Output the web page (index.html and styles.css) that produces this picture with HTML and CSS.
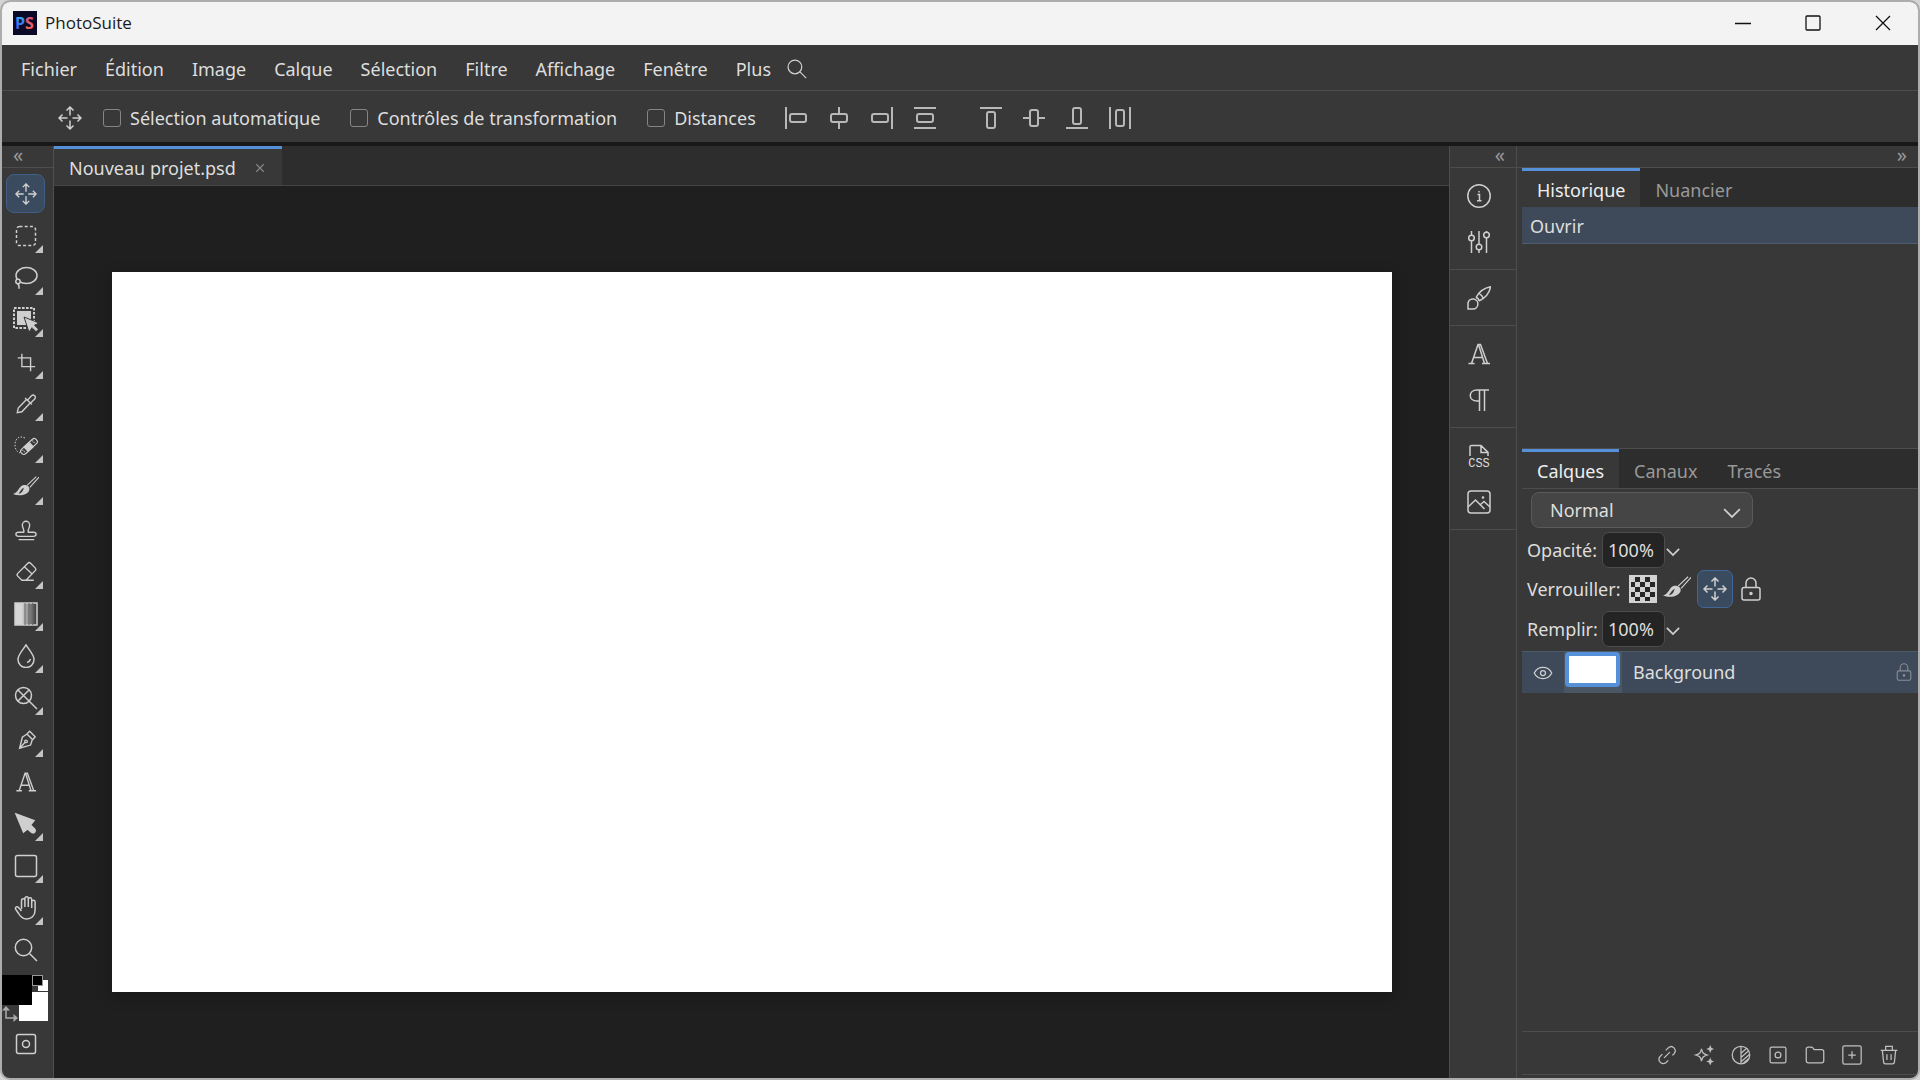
FILE: index.html
```html
<!DOCTYPE html>
<html lang="fr">
<head>
<meta charset="utf-8">
<meta name="viewport" content="width=device-width, initial-scale=1">
<title>PhotoSuite</title>
<link rel="stylesheet" href="styles.css">
</head>
<body>
<svg class="sprite" aria-hidden="true">
  <defs>
    <linearGradient id="logo-p" x1="0" y1="0" x2="0" y2="1"><stop offset="0" stop-color="#2fc6f5"/><stop offset="1" stop-color="#4a35e0"/></linearGradient>
    <linearGradient id="logo-s" x1="0" y1="0" x2="0" y2="1"><stop offset="0" stop-color="#c94fa8"/><stop offset="1" stop-color="#ff6a3c"/></linearGradient>
    <linearGradient id="ramp"><stop offset=".3" stop-color="#d6d6d6"/><stop offset="1" stop-color="#383838"/></linearGradient>
  </defs>
  <symbol id="move" viewBox="0 0 24 24"><path d="M12 9.500V1M8.500 4.500 12 1l3.500 3.500M12 14.500V23M8.500 19.500 12 23l3.500-3.500M9.500 12H1M4.500 8.500 1 12l3.500 3.500M14.500 12H23M19.500 8.500 23 12l-3.500 3.500"/></symbol>
  <symbol id="marquee" viewBox="0 0 24 24"><rect x="2.500" y="2.500" width="19" height="19" rx="3" stroke-dasharray="3 2.200"/></symbol>
  <symbol id="lasso" viewBox="0 0 24 24"><ellipse cx="12.500" cy="9.500" rx="10.500" ry="8"/><circle cx="4" cy="15.500" r="2.200" fill="#383838"/><path d="M3.500 17.700c2 .8 1.500 3 1.500 5"/></symbol>
  <symbol id="object" viewBox="0 0 26 26"><rect x="1" y="1" width="20" height="20" stroke-width="2" stroke-dasharray="2.600 1.400"/><path fill="currentColor" stroke="none" d="M4 4h14v14H4z"/><path fill="currentColor" stroke="#383838" stroke-width="1" d="m11 10 15 6-4.500 2.200 4 4-2.500 2.500-4-4-3 4.500z"/></symbol>
  <symbol id="crop" viewBox="0 0 24 24"><path d="M7.500 3v14H22M3 7.500h14V22"/></symbol>
  <symbol id="pipette" viewBox="0 0 24 24"><path d="m12.500 7-9 9.500-1 5 5-1 9-9.500M11 5.500l7.500 7M14 7.500l4-4.500c2.500-2 5.500 1 3.500 3.500l-4.500 4.500"/></symbol>
  <symbol id="heal" viewBox="0 0 24 24"><path stroke-width="1" stroke-dasharray="1.500 1.500" d="M11 4C5 1 1 5 1 11c0 4 2 7 5 8"/><g transform="rotate(-43 15 12.500)" stroke-width="1.200"><rect x="5" y="9.500" width="20" height="6" rx="2.500"/><path fill="currentColor" d="M11 9.500h7v6h-7z"/><path stroke-dasharray="1 1" d="M8 10.500v4M21.500 10.500v4"/></g></symbol>
  <symbol id="brush" viewBox="0 0 24 24"><path stroke-width="1" d="m13 9.500 8.500-8M15.500 11.500 24 2"/><path fill="currentColor" stroke="none" fill-rule="evenodd" d="M0 17.500c5-1 5-6.500 9-8 4-1 7 1.500 6 4.500C13.500 18.500 6 20 0 17.500zm5-.2c3 0 4.500-3 5-5.500-2.500 1-3 3.500-5 5.500z"/></symbol>
  <symbol id="stamp" viewBox="0 0 24 24"><path d="M9.500 14.500c1-3-1.500-4.500-1.500-8a4 4 0 0 1 8 0c0 3.500-2.500 5-1.500 8h5.500c4 0 4 4.500 0 4.500H4c-4 0-4-4.500 0-4.500zM4 22.500h17"/></symbol>
  <symbol id="eraser" viewBox="0 0 24 24"><path d="M7.500 21 3 16.500c-1-1-1-2 0-3L14 2.500c1-1 2-1 3 0L22 7.500c1 1 1 2 0 3L12 21zM10.500 6.500l8.500 8M7.500 21h13"/></symbol>
  <symbol id="gradient" viewBox="0 0 24 24"><rect x="1" y="1" width="22" height="22" fill="url(#ramp)"/><path d="M11 1v22M15 1v22M18.500 1v22" stroke="#666" stroke-width="1"/></symbol>
  <symbol id="drop" viewBox="0 0 24 24"><path d="M12 .8C9 6 4 10.500 4 15.500a8 8 0 0 0 16 0C20 10.500 15 6 12 .8zM16.500 15c-.5 2-1.500 3-3.500 3.500"/></symbol>
  <symbol id="dodge" viewBox="0 0 24 24"><circle cx="9.500" cy="9.500" r="8"/><path d="m4 4 19 19M15 4 4 15"/></symbol>
  <symbol id="pen" viewBox="0 0 24 24"><path d="m13 5.500 6 6-2 6L5 21 8 9zM13.500 5 16 2.500l6 6-2.500 3M5 21l6-6.500"/><circle cx="12" cy="13.500" r="1.400"/></symbol>
  <symbol id="type" viewBox="0 0 24 24"><path d="M4.500 21.500 11 2.500h2.500l7 19M7 15.500h8M11.500 2.500l6 19M1.500 21.500h6M15 21.500h8"/></symbol>
  <symbol id="pointer" viewBox="0 0 24 24"><path fill="currentColor" d="m2 2 18 6.500-3.500 4.500 4.500 4.500c1 2-1 4-3 3L13.500 17 9.500 20z"/></symbol>
  <symbol id="square" viewBox="0 0 24 24"><rect x="1.500" y="1.500" width="21" height="21" rx="2"/></symbol>
  <symbol id="hand" viewBox="0 0 24 24"><path d="M7.500 13V4.500a1.700 1.700 0 0 1 3.400 0V11M10.900 11V2.500a1.700 1.700 0 0 1 3.400 0V11M14.300 11V3.500a1.700 1.700 0 0 1 3.400 0V12M17.700 12V6a1.700 1.700 0 0 1 3.400 0v8c0 6-4 9-8.500 9-4 0-6-2-8-5.500L1.500 13c-.5-2 1.500-3 3-1.500L7.500 15"/></symbol>
  <symbol id="search" viewBox="0 0 24 24"><circle cx="9.500" cy="9.500" r="8.200"/><path d="m15.500 15.500 7.500 7.500"/></symbol>
  <symbol id="mask" viewBox="0 0 24 24"><rect x="2.500" y="2.500" width="19" height="19" rx="2"/><circle cx="12" cy="12" r="3.500"/></symbol>
  <symbol id="swap" viewBox="0 0 16 16"><path d="M4 3v9h8"/><path fill="currentColor" stroke="none" d="M0 4.500 4 0l4 4.500zM11.500 8 16 12l-4.500 4z"/></symbol>
  <symbol id="info" viewBox="0 0 24 24"><circle cx="12" cy="12" r="11.200"/><path d="M10.500 10.500h2v6M10 16.800h4.500M12 7v1.500"/></symbol>
  <symbol id="sliders" viewBox="0 0 24 24"><path d="M4.500 1v4M4.500 11v12M12 1v13M12 20v3M19.500 1v1M19.500 8v15"/><circle cx="4.500" cy="8" r="2.800"/><circle cx="12" cy="17" r="2.800"/><circle cx="19.500" cy="5" r="2.800"/></symbol>
  <symbol id="paint" viewBox="0 0 24 24"><path d="M1 23v-6a5 5 0 1 1 5 6zM9 11.500C12 6 17 2 23.500.8 22.500 7 18 12 12 15M9 11.500c2 .5 3 1.500 3 3.500M12.500 8c1.500.5 3 2 3.500 4"/></symbol>
  <symbol id="para" viewBox="0 0 24 24"><path d="M22 2H10c-9 0-9 11 0 11h2.500M12.500 2v21M17.500 2v21"/></symbol>
  <symbol id="cssfile" viewBox="0 0 24 24"><path d="M3 12V3c0-1 .6-1.600 1.600-1.600H14l7 7V12M14 1.500v7h7"/></symbol>
  <symbol id="image" viewBox="0 0 24 24"><rect x="1" y="1" width="22" height="22" rx="3"/><path d="m1 17 7.500-7 9 9M13 15l4-3.500 6 5.500"/><circle cx="16" cy="7.500" r=".6"/></symbol>
  <symbol id="chevron" viewBox="0 0 16 16"><path d="m1 4.500 7 7 7-7"/></symbol>
  <symbol id="lock" viewBox="0 0 24 24"><rect x="3" y="10.500" width="18" height="12.500" rx="2"/><path d="M7 10.500V6a5 5 0 0 1 10 0v4.500"/><circle cx="12" cy="16.500" r="1" fill="currentColor"/></symbol>
  <symbol id="checker" viewBox="0 0 28 28"><path fill="#d2d2d2" stroke="none" d="M0 0h28v28H0z"/><path fill="#262626" stroke="none" d="M6 2h5v5H6zM16 2h5v5h-5zM2 7h4v5H2zM11 7h5v5h-5zM21 7h5v5h-5zM6 12h5v5H6zM16 12h5v5h-5zM2 17h4v5H2zM11 17h5v5h-5zM21 17h5v5h-5zM6 22h5v4H6zM16 22h5v4h-5z"/></symbol>
  <symbol id="eye" viewBox="0 0 24 24"><path d="M1.500 12C6 3 18 3 22.500 12 18 21 6 21 1.500 12z"/><circle cx="12" cy="12" r="3"/></symbol>
  <symbol id="link" viewBox="0 0 24 24"><path d="m8.500 15.500 7-7M10.500 6.500l3-3c5-4.500 11 2 7 7l-2 2M13.500 18.500l-2.500 2.500c-5 4-11-2-7.500-7l3-3"/></symbol>
  <symbol id="spark" viewBox="0 0 24 24"><path d="M9 4.500c1 5 2 6 7 7.500-5 1.500-6 2.500-7 7.500-1-5-2-6-7-7.500 5-1.500 6-2.500 7-7.500z"/><path fill="currentColor" d="m19.500 2 .8 2 2 .8-2 .8-.8 2-.8-2-2-.8 2-.8zM19.500 17l.8 2 2 .8-2 .8-.8 2-.8-2-2-.8 2-.8z"/></symbol>
  <symbol id="contrast" viewBox="0 0 24 24"><circle cx="12" cy="12" r="10.500"/><path d="M12 1.500v21M12 10l7-6M12 15l9.500-8.500M12 20 22.500 11M15 21.500l6-5"/></symbol>
  <symbol id="folder" viewBox="0 0 24 24"><path d="M1.500 19V5c0-1.500.8-2.500 2.500-2.500h3.500c1 0 1.500.3 2 1L11 5.500h9c1.700 0 2.500.8 2.500 2.500v11c0 1.500-.8 2.500-2.500 2.500H4c-1.700 0-2.500-1-2.500-2.500z"/></symbol>
  <symbol id="plus" viewBox="0 0 24 24"><rect x="1" y="1" width="22" height="22" rx="2"/><path d="M12 7.500v9M7.500 12h9"/></symbol>
  <symbol id="trash" viewBox="0 0 24 24"><path d="M2 6.500h20M4 6.500l1.500 14c.2 1.500 1 2 2 2h9c1 0 1.800-.5 2-2l1.500-14M8 6V1.500h8V6M9.500 11v7M14.500 11v7"/></symbol>
  <symbol id="al-left" viewBox="0 0 22 22"><path d="M1 0v22"/><rect x="5" y="7" width="16" height="8" rx="2"/></symbol>
  <symbol id="al-center" viewBox="0 0 22 22"><path d="M11 0v7M11 15v7"/><rect x="3" y="7" width="16" height="8" rx="2"/></symbol>
  <symbol id="al-right" viewBox="0 0 22 22"><path d="M21 0v22"/><rect x="1" y="7" width="16" height="8" rx="2"/></symbol>
  <symbol id="al-dist" viewBox="0 0 22 22"><path d="M0 1h22M0 21h22"/><rect x="3" y="7" width="16" height="8" rx="2"/></symbol>
  <symbol id="al-top" viewBox="0 0 22 22"><path d="M0 1h22"/><rect x="7" y="5" width="8" height="16" rx="2"/></symbol>
  <symbol id="al-middle" viewBox="0 0 22 22"><path d="M0 11h7M15 11h7"/><rect x="7" y="3" width="8" height="16" rx="2"/></symbol>
  <symbol id="al-bottom" viewBox="0 0 22 22"><path d="M0 21h22"/><rect x="7" y="1" width="8" height="16" rx="2"/></symbol>
  <symbol id="al-hdist" viewBox="0 0 22 22"><path d="M1 0v22M21 0v22"/><rect x="7" y="3" width="8" height="16" rx="2"/></symbol>
</svg>

<div class="window">
  <header class="titlebar">
    <svg class="logo" viewBox="0 0 24 24" aria-hidden="true"><rect width="24" height="24" fill="#0b0a26"/><text x="2" y="18" class="logo-text" fill="url(#logo-p)">P</text><text x="12" y="18" class="logo-text" fill="url(#logo-s)">S</text></svg>
    <span class="app-name">PhotoSuite</span>
    <div class="window-controls">
      <button aria-label="Réduire"><svg class="ctl" viewBox="0 0 16 16"><path d="M0 8.500h16"/></svg></button>
      <button aria-label="Agrandir"><svg class="ctl" viewBox="0 0 16 16"><rect x="1" y="1" width="14" height="14" rx="1"/></svg></button>
      <button aria-label="Fermer"><svg class="ctl" viewBox="0 0 16 16"><path d="m1 1 14 14M15 1 1 15"/></svg></button>
    </div>
  </header>

  <nav class="menubar">
    <button>Fichier</button><button>Édition</button><button>Image</button><button>Calque</button><button>Sélection</button><button>Filtre</button><button>Affichage</button><button>Fenêtre</button><button>Plus</button>
    <button class="menu-search" aria-label="Rechercher"><svg class="icon small"><use href="#search"/></svg></button>
  </nav>

  <div class="options">
    <svg class="icon"><use href="#move"/></svg>
    <label><input type="checkbox">Sélection automatique</label>
    <label><input type="checkbox">Contrôles de transformation</label>
    <label><input type="checkbox">Distances</label>
    <div class="align">
      <button aria-label="Aligner à gauche"><svg class="icon mid"><use href="#al-left"/></svg></button>
      <button aria-label="Centrer horizontalement"><svg class="icon mid"><use href="#al-center"/></svg></button>
      <button aria-label="Aligner à droite"><svg class="icon mid"><use href="#al-right"/></svg></button>
      <button aria-label="Distribuer verticalement"><svg class="icon mid"><use href="#al-dist"/></svg></button>
    </div>
    <div class="align">
      <button aria-label="Aligner en haut"><svg class="icon mid"><use href="#al-top"/></svg></button>
      <button aria-label="Centrer verticalement"><svg class="icon mid"><use href="#al-middle"/></svg></button>
      <button aria-label="Aligner en bas"><svg class="icon mid"><use href="#al-bottom"/></svg></button>
      <button aria-label="Distribuer horizontalement"><svg class="icon mid"><use href="#al-hdist"/></svg></button>
    </div>
  </div>

  <div class="workspace">
    <aside class="toolbar">
      <button class="collapse start" aria-label="Replier les outils">«</button>
      <div class="tools">
        <button class="tool active" aria-label="Déplacer"><svg class="icon mid"><use href="#move"/></svg></button>
        <button class="tool more" aria-label="Sélection rectangulaire"><svg class="icon"><use href="#marquee"/></svg></button>
        <button class="tool more" aria-label="Lasso"><svg class="icon"><use href="#lasso"/></svg></button>
        <button class="tool more" aria-label="Sélection d'objet"><svg class="icon brush"><use href="#object"/></svg></button>
        <button class="tool more" aria-label="Recadrage"><svg class="icon mid"><use href="#crop"/></svg></button>
        <button class="tool more" aria-label="Pipette"><svg class="icon mid"><use href="#pipette"/></svg></button>
        <button class="tool more" aria-label="Correcteur"><svg class="icon"><use href="#heal"/></svg></button>
        <button class="tool more" aria-label="Pinceau"><svg class="icon brush"><use href="#brush"/></svg></button>
        <button class="tool" aria-label="Tampon"><svg class="icon mid"><use href="#stamp"/></svg></button>
        <button class="tool more" aria-label="Gomme"><svg class="icon mid"><use href="#eraser"/></svg></button>
        <button class="tool more" aria-label="Dégradé"><svg class="icon"><use href="#gradient"/></svg></button>
        <button class="tool more" aria-label="Flou"><svg class="icon"><use href="#drop"/></svg></button>
        <button class="tool more" aria-label="Densité"><svg class="icon"><use href="#dodge"/></svg></button>
        <button class="tool more" aria-label="Plume"><svg class="icon mid"><use href="#pen"/></svg></button>
        <button class="tool" aria-label="Texte"><svg class="icon mid"><use href="#type"/></svg></button>
        <button class="tool more" aria-label="Sélection de tracé"><svg class="icon"><use href="#pointer"/></svg></button>
        <button class="tool more" aria-label="Rectangle"><svg class="icon"><use href="#square"/></svg></button>
        <button class="tool more" aria-label="Main"><svg class="icon"><use href="#hand"/></svg></button>
        <button class="tool" aria-label="Zoom"><svg class="icon"><use href="#search"/></svg></button>
      </div>
      <div class="colors">
        <button class="swatch back" aria-label="Arrière-plan"></button>
        <button class="swatch front" aria-label="Premier plan"></button>
        <span class="mini light"></span><span class="mini dark"></span>
        <svg class="icon swap"><use href="#swap"/></svg>
      </div>
      <button class="tool" aria-label="Masque rapide"><svg class="icon"><use href="#mask"/></svg></button>
    </aside>

    <main class="document">
      <div class="doc-tabs">
        <div class="doc-tab"><span>Nouveau projet.psd</span><button aria-label="Fermer le document"><svg class="icon tiny" viewBox="0 0 16 16"><path d="m3 3 10 10M13 3 3 13"/></svg></button></div>
      </div>
      <div class="stage"><div class="canvas"></div></div>
    </main>

    <aside class="strip">
      <button class="collapse end" aria-label="Déplier les panneaux">«</button>
      <div class="strip-group">
        <button aria-label="Informations"><svg class="icon"><use href="#info"/></svg></button>
        <button aria-label="Propriétés"><svg class="icon"><use href="#sliders"/></svg></button>
      </div>
      <div class="strip-group"><button aria-label="Pinceaux"><svg class="icon"><use href="#paint"/></svg></button></div>
      <div class="strip-group">
        <button aria-label="Caractère"><svg class="icon"><use href="#type"/></svg></button>
        <button aria-label="Paragraphe"><svg class="icon"><use href="#para"/></svg></button>
      </div>
      <div class="strip-group">
        <button class="css-button"><svg class="icon"><use href="#cssfile"/></svg><span>CSS</span></button>
        <button aria-label="Image"><svg class="icon"><use href="#image"/></svg></button>
      </div>
    </aside>

    <aside class="panels">
      <button class="collapse end" aria-label="Replier les panneaux">»</button>
      <section class="panel history">
        <div class="tabs"><button class="tab active">Historique</button><button class="tab">Nuancier</button></div>
        <button class="history-row">Ouvrir</button>
      </section>
      <section class="panel layers">
        <div class="tabs"><button class="tab active">Calques</button><button class="tab">Canaux</button><button class="tab">Tracés</button></div>
        <div class="blend">
          <select aria-label="Mode de fusion"><option>Normal</option></select>
          <svg class="icon chev"><use href="#chevron"/></svg>
        </div>
        <div class="field"><label for="opacity">Opacité:</label><input id="opacity" type="text" value="100%"><button aria-label="Régler l'opacité"><svg class="icon drop"><use href="#chevron"/></svg></button></div>
        <div class="field locks"><span>Verrouiller:</span>
          <button aria-label="Transparence"><svg class="icon checker"><use href="#checker"/></svg></button>
          <button aria-label="Pixels"><svg class="icon large"><use href="#brush"/></svg></button>
          <button class="active" aria-label="Position"><svg class="icon"><use href="#move"/></svg></button>
          <button aria-label="Tout"><svg class="icon"><use href="#lock"/></svg></button>
        </div>
        <div class="field"><label for="fill">Remplir:</label><input id="fill" type="text" value="100%"><button aria-label="Régler le remplissage"><svg class="icon drop"><use href="#chevron"/></svg></button></div>
        <div class="layer">
          <button class="layer-eye" aria-label="Visibilité"><svg class="icon small"><use href="#eye"/></svg></button>
          <div class="thumb-cell"><div class="thumb"></div></div>
          <span class="layer-name">Background</span>
          <svg class="icon layer-lock"><use href="#lock"/></svg>
        </div>
        <footer class="layer-actions">
          <button aria-label="Lier"><svg class="icon small"><use href="#link"/></svg></button>
          <button aria-label="Effets"><svg class="icon small"><use href="#spark"/></svg></button>
          <button aria-label="Réglage"><svg class="icon small"><use href="#contrast"/></svg></button>
          <button aria-label="Masque"><svg class="icon small"><use href="#mask"/></svg></button>
          <button aria-label="Dossier"><svg class="icon small"><use href="#folder"/></svg></button>
          <button aria-label="Nouveau calque"><svg class="icon small"><use href="#plus"/></svg></button>
          <button aria-label="Supprimer"><svg class="icon small"><use href="#trash"/></svg></button>
        </footer>
      </section>
    </aside>
  </div>
</div>
</body>
</html>
```
FILE: styles.css
```css
* { box-sizing: border-box; }

:root {
  --panel: #383838;
  --dark: #2d2d2d;
  --line: #4d4d4d;
  --blue: #5590d9;
  --select: #3e4a5a;
  --text: #dedede;
}

body {
  margin: 0;
  background: #d4d4d4;
  color: var(--text);
  font: 18px/28px "Noto Sans", "Open Sans", sans-serif;
}

button, input, select {
  margin: 0;
  padding: 0;
  border: 0;
  background: none;
  color: inherit;
  font: inherit;
}

.sprite { position: absolute; width: 0; height: 0; }

.window {
  display: flex;
  flex-direction: column;
  min-height: 100vh;
  border: 2px solid #adadad;
  border-radius: 10px;
  overflow: hidden;
  background: var(--panel);
}

.icon {
  display: block;
  flex: none;
  width: 24px;
  height: 24px;
  fill: none;
  stroke: currentColor;
  stroke-width: 1.5;
  color: #cfcfcf;
}
.icon.mid { width: 22px; height: 22px; }
.icon.small { width: 20px; height: 20px; }
.icon.tiny { width: 12px; height: 12px; }
.icon.brush { width: 26px; height: 26px; }
.icon.large, .icon.checker { width: 28px; height: 28px; }

/* Title bar */
.titlebar {
  display: flex;
  align-items: center;
  height: 43px;
  padding: 0 0 2px 11px;
  background: #f3f3f3;
  color: #1a1a1a;
}
.logo { width: 24px; height: 24px; margin-right: 8px; }
.logo-text { font: bold 16px "Open Sans", sans-serif; }
.app-name { font-family: "Open Sans", sans-serif; font-size: 17px; }
.window-controls { display: flex; margin-left: auto; }
.window-controls button { display: grid; place-items: center; width: 70px; height: 41px; }
.ctl { width: 16px; height: 16px; fill: none; stroke: #111; stroke-width: 1.3; }

/* Menu */
.menubar {
  display: flex;
  align-items: center;
  gap: 28px;
  height: 46px;
  padding: 2px 0 0 19px;
  border-bottom: 1px solid var(--line);
}
.menubar .menu-search { margin-left: -12px; }

/* Tool options */
.options {
  display: flex;
  align-items: center;
  height: 55px;
  padding: 2px 0 0 56px;
  border-bottom: 4px solid #181818;
}
.options label { display: flex; align-items: center; margin-left: 21px; }
.options label + label { margin-left: 30px; }
.options input {
  appearance: none;
  width: 18px;
  height: 18px;
  margin-right: 9px;
  border: 1px solid #858585;
  border-radius: 3px;
}
.align { display: flex; margin-left: 19px; }
.align + .align { margin-left: 23px; }
.align button { display: grid; place-items: center; width: 43px; }
.align .icon { stroke-width: 2; color: #b8b8b8; }

/* Workspace columns */
.workspace {
  display: grid;
  grid-template-columns: 52px minmax(0, 1fr) 68px 401px;
  flex: 1;
}
.collapse {
  display: block;
  width: 100%;
  height: 22px;
  padding: 0 11px 3px;
  border-bottom: 1px solid var(--line);
  color: #999;
  font-size: 20px;
  line-height: 16px;
}
.collapse.start { text-align: left; }
.collapse.end { text-align: right; }

/* Toolbar */
.toolbar { border-right: 1px solid #505050; }
.tools { display: grid; gap: 3px; padding-top: 6px; }
.tool {
  position: relative;
  display: grid;
  place-items: center;
  width: 39px;
  height: 39px;
  margin-left: 4px;
}
.tool.active {
  border: 1px solid #3f5f86;
  border-radius: 8px;
  background: #3a4b5f;
}
.tool.more::after {
  content: "";
  position: absolute;
  right: 2px;
  bottom: 2px;
  border: 4px solid transparent;
  border-right-color: #c4c4c4;
  border-bottom-color: #c4c4c4;
}
.colors { position: relative; height: 48px; margin: 6px 0 1px; }
.swatch, .mini, .swap { position: absolute; }
.swatch.front { left: 0; top: 0; width: 30px; height: 30px; background: #000; }
.swatch.back { left: 17px; top: 17px; width: 29px; height: 29px; background: #fff; }
.mini.dark { left: 30px; top: 0; width: 11px; height: 11px; border: 1px solid #999; background: #000; }
.mini.light { left: 36px; top: 5px; width: 10px; height: 11px; background: #fff; }
.icon.swap { left: 0; top: 31px; width: 16px; height: 16px; color: #aaa; }

/* Document */
.document { display: flex; flex-direction: column; background: #1f1f1f; }
.doc-tabs { display: flex; height: 40px; border-bottom: 1px solid #444; background: var(--dark); }
.doc-tab {
  display: flex;
  align-items: center;
  gap: 18px;
  padding: 2px 16px 0 15px;
  border-top: 3px solid var(--blue);
  background: var(--panel);
}
.doc-tab .icon { color: #888; }
.stage { display: grid; flex: 1; place-items: center; padding: 0 57px 0 58px; }
.canvas {
  width: 100%;
  aspect-ratio: 16 / 9;
  background: #fff;
  box-shadow: 0 4px 14px rgba(0, 0, 0, .25);
}

/* Icon strip */
.strip { border: solid var(--line); border-width: 0 1px; }
.strip-group { padding: 5px 8px 4px 0; border-bottom: 1px solid var(--line); }
.strip-group button { display: grid; place-items: center; width: 100%; height: 46px; }
.css-button > * { grid-area: 1 / 1; }
.css-button span {
  align-self: end;
  padding-bottom: 9px;
  font: 12px/11px "Liberation Mono", monospace;
}

/* Panels */
.panels { display: flex; flex-direction: column; }
.panel { display: flex; flex-direction: column; padding-left: 5px; }
.history { min-height: 280px; }
.layers { flex: 1; padding-bottom: 3px; }
.tabs { display: flex; height: 39px; background: var(--dark); }
.layers .tabs { height: 41px; border: solid var(--line); border-width: 1px 0; }
.tab { padding: 2px 15px 0; border-top: 3px solid transparent; color: #999; }
.tab.active { border-color: var(--blue); background: var(--panel); color: #eee; }
.history-row {
  height: 37px;
  padding: 2px 0 0 8px;
  border-bottom: 1px solid #4e5d6c;
  background: var(--select);
  text-align: left;
}
.blend { display: grid; align-items: center; width: 222px; margin: 3px 0 4px 9px; }
.blend > * { grid-area: 1 / 1; }
.blend select {
  appearance: none;
  height: 36px;
  padding-left: 18px;
  border: 1px solid #5a5a5a;
  border-radius: 8px;
  background: #454545;
}
.icon.chev { width: 18px; height: 18px; margin: 6px 12px 0 0; justify-self: end; pointer-events: none; }
.field { display: flex; align-items: center; height: 36px; padding-left: 5px; }
.field label { width: 75px; }
.field input {
  width: 63px;
  height: 36px;
  padding-left: 5px;
  border: 1px solid #4c4c4c;
  border-radius: 7px;
  background: #242424;
}
.icon.drop { width: 14px; height: 14px; margin: 4px 0 0 1px; stroke-width: 2; }
.locks { height: 43px; padding-bottom: 2px; }
.locks span { width: 102px; }
.locks button { display: grid; place-items: center; width: 36px; height: 38px; }
.locks button:first-of-type { width: 28px; }
.locks button:nth-of-type(2) { width: 40px; }
.locks .active { border: 1px solid #41679a; border-radius: 7px; background: #3a4b5f; }
.layer {
  display: flex;
  align-items: stretch;
  height: 42px;
  margin-top: 4px;
  border-top: 1px solid #4b5968;
  background: var(--select);
}
.layer-eye { display: grid; place-items: center; width: 42px; }
.thumb-cell { width: 58px; padding-left: 1px; background: #4a5663; }
.thumb { width: 55px; height: 35px; border: 4px solid var(--blue); border-radius: 4px; background: #fff; }
.layer-name { padding-left: 11px; line-height: 40px; }
.icon.layer-lock { width: 18px; height: 18px; margin: 11px 5px 0 auto; opacity: .5; }
.layer-actions {
  display: flex;
  justify-content: flex-end;
  height: 44px;
  margin-top: auto;
  padding: 3px 11px 0 0;
  border: solid var(--line);
  border-width: 1px 0;
}
.layer-actions button { display: grid; place-items: center; width: 37px; }
.layer-actions .icon { color: #c0c0c0; }
```
